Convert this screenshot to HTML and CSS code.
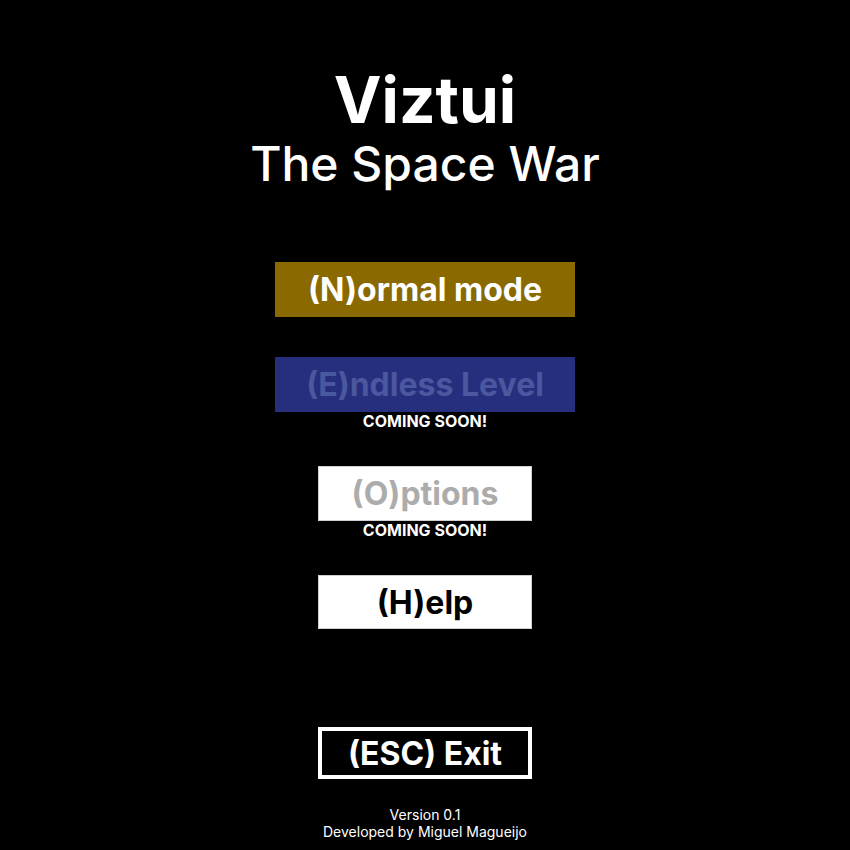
FILE: index.html
```html
<!DOCTYPE html>
<html>
<head>
<meta charset="utf-8">
<link rel="stylesheet" href="styles.css">
</head>
<body>
<main class="screen">
  <header class="title">
    <h1 class="title-main">Viztui</h1>
    <h2 class="title-sub">The Space War</h2>
  </header>
  <nav class="menu">
    <div class="item">
      <div class="btn btn-wide btn-normal">(N)ormal mode</div>
    </div>
    <div class="item">
      <div class="btn btn-wide btn-endless">(E)ndless Level</div>
      <div class="note">COMING SOON!</div>
    </div>
    <div class="item">
      <div class="btn btn-narrow btn-options">(O)ptions</div>
      <div class="note">COMING SOON!</div>
    </div>
    <div class="item">
      <div class="btn btn-narrow btn-help">(H)elp</div>
    </div>
  </nav>
  <div class="btn btn-narrow btn-exit">(ESC) Exit</div>
  <footer class="footer">
    <div>Version 0.1</div>
    <div>Developed by Miguel Magueijo</div>
  </footer>
</main>
</body>
</html>
```
FILE: styles.css
```css
html, body {
  margin: 0;
  padding: 0;
  background: #000;
}
body {
  font-family: Inter, "Noto Sans", sans-serif;
  color: #fff;
}
.screen {
  width: 850px;
  height: 850px;
  display: flex;
  flex-direction: column;
  align-items: center;
  box-sizing: border-box;
  padding-top: 64px;
}
.title {
  display: flex;
  flex-direction: column;
  align-items: center;
}
.title-main {
  margin: 0;
  font-size: 64px;
  font-weight: 700;
  line-height: 72px;
}
.title-sub {
  margin: 0;
  font-size: 48px;
  font-weight: 500;
  line-height: 56px;
}
.menu {
  margin-top: 70px;
  display: flex;
  flex-direction: column;
  align-items: center;
  gap: 40px;
}
.item {
  display: flex;
  flex-direction: column;
  align-items: center;
}
.btn {
  height: 55px;
  box-sizing: border-box;
  display: flex;
  align-items: center;
  justify-content: center;
  font-size: 32px;
  font-weight: 700;
}
.btn-wide { width: 300px; }
.btn-narrow { width: 214px; }
.btn-normal { background: #8a6a00; color: #fff; }
.btn-endless { background: #262f7e; color: #4b579f; }
.btn-options { background: #fff; color: #acacac; border: 1px solid #d0d0d0; }
.btn-help { background: #fff; color: #000; border: 1px solid #d0d0d0; height: 54px; }
.btn-exit {
  margin-top: 98px;
  height: 52px;
  background: #000;
  color: #fff;
  border: 4px solid #fff;
}
.note {
  font-size: 16px;
  font-weight: 700;
  line-height: 16px;
  margin-top: 1px;
  margin-bottom: -3px;
}
.footer {
  margin-top: 27px;
  font-size: 14px;
  line-height: 17px;
  text-align: center;
}
```
